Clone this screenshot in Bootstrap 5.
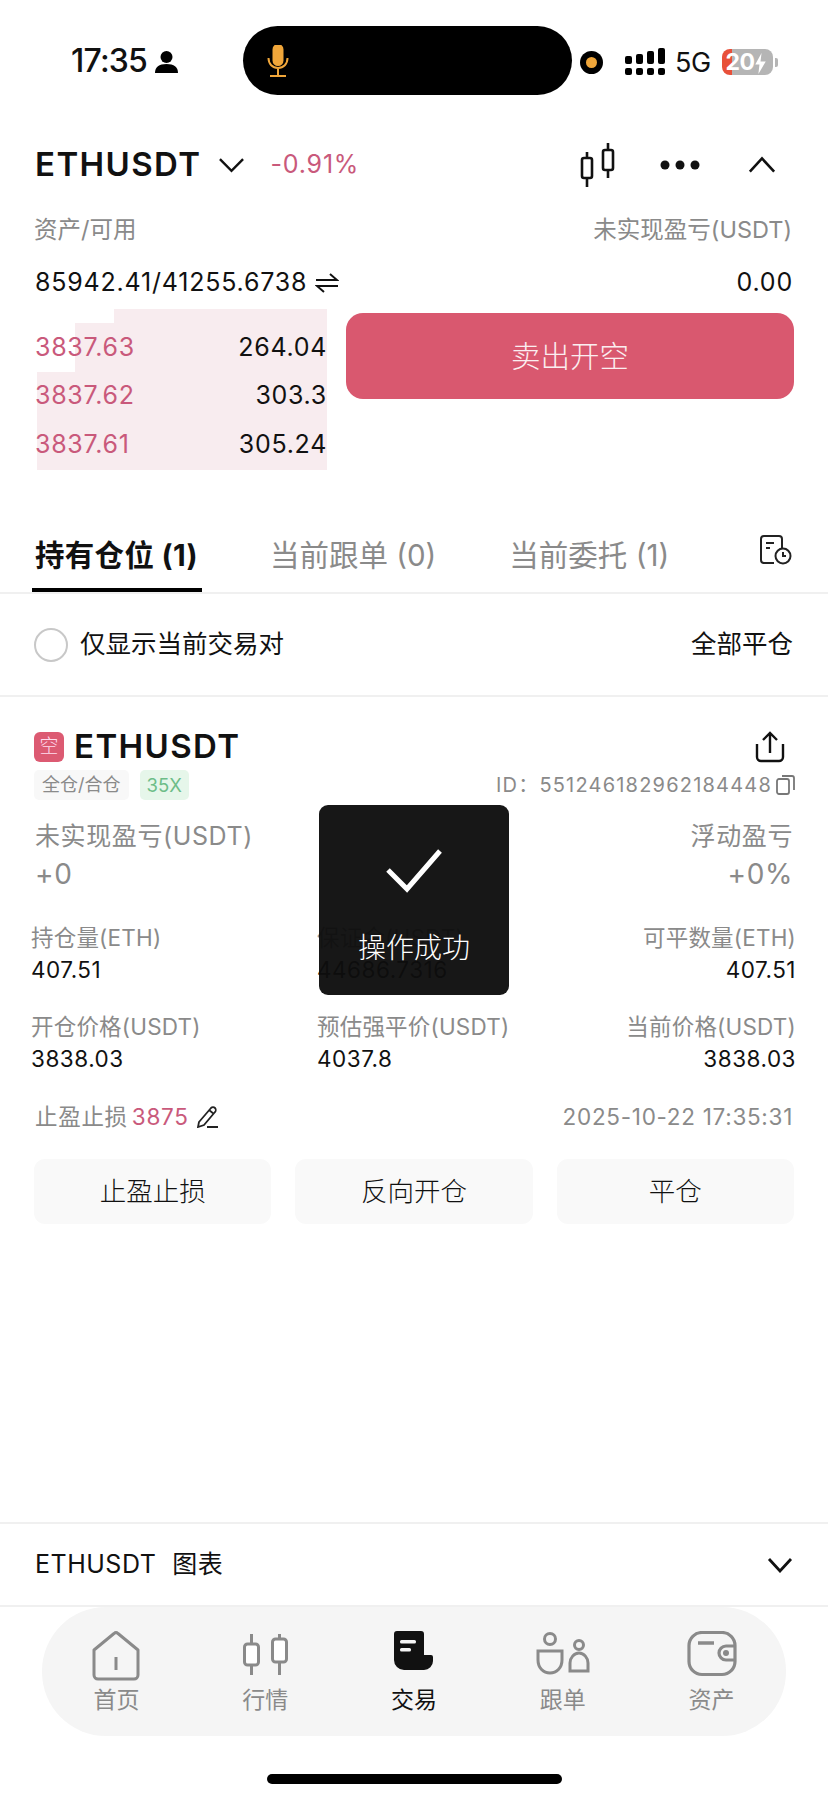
<!doctype html>
<html lang="zh">
<head>
<meta charset="utf-8">
<link href="https://cdn.jsdelivr.net/npm/bootstrap@5.3.2/dist/css/bootstrap.min.css" rel="stylesheet">
<style>
    body {
        width: 828px;
        height: 1800px;
        overflow: hidden;
        position: relative;
        font-family: Inter, "Noto Sans CJK SC", sans-serif;
        color: #111;
    }
    .gray { color: #8a8a8a; }
    .red { color: #c9597b; }
    .status-wrap { height: 122px; padding: 26px 0 0 71px; }
    .clock { font-size: 32px; font-weight: 500; width: 172px; line-height: 70px; letter-spacing: -.8px; }
    .island { width: 329px; height: 69px; background: #000; border-radius: 35px; padding-left: 24px; }
    .five-g { font-size: 27px; letter-spacing: -.5px; line-height: 1; margin: 0 11px 0 10px; }
    .battery { width: 51px; height: 26px; border-radius: 8px; background: linear-gradient(90deg, #e8503a 0 10px, #b5b5b5 10px); color: #fff; font-size: 23px; font-weight: 700; line-height: 26px; padding-left: 4px; letter-spacing: -.5px; white-space: nowrap; }
    .battery-nub { width: 3px; height: 9px; background: #b5b5b5; border-radius: 0 2px 2px 0; margin-left: 2px; }
    .head-row { padding: 0 52px 0 35px; height: 86px; margin-bottom: 2px; }
    .pair { font-size: 33px; font-weight: 600; letter-spacing: 1.4px; }
    .pct { font-size: 25px; letter-spacing: .8px; margin-left: 26px; }
    .label-row { padding: 0 36px 0 34px; font-size: 23.5px; height: 40px; }
    .bal-row { padding: 0 35px; font-size: 25px; letter-spacing: .8px; height: 40px; margin-top: 13px; }
    .trade-row { padding: 6px 34px 0 37px; height: 172px; }
    .book {
        width: 290px;
        height: 161px;
        padding-top: 14px;
        font-size: 25px;
        letter-spacing: .7px;
        background:
            linear-gradient(#fff, #fff) 0 0 / 77px 14px no-repeat,
            linear-gradient(#fff, #fff) 0 14px / 38px 49px no-repeat,
            #f8ecef;
    }
    .book-line { height: 48.5px; }
    .book-line .red { margin-left: -2px; }
    .sell-btn { width: 448px; height: 86px; margin: 4px 0 0 19px; background: #d9586f; color: #fbeef0; border: 0; border-radius: 17px; font-size: 29.5px; font-weight: 300; }
    .sell-btn:hover { background: #d9586f; color: #fbeef0; }
    .tab-row { height: 131px; padding: 0 36px 0 35px; border-bottom: 2px solid #f0f0f0; margin-top: -12px; }
    .tab-item { font-size: 29.5px; line-height: 40px; padding-bottom: 17px; position: relative; }
    .tab-on { font-weight: 700; color: #111; letter-spacing: .3px; }
    .tab-on::after { content: ""; position: absolute; left: -3px; right: -4px; bottom: 0; height: 4px; background: #000; }
    .filter-row { height: 103px; padding: 0 35px 0 34px; border-bottom: 2px solid #f0f0f0; font-size: 25.5px; }
    .radio-dot { width: 34px; height: 34px; border: 2px solid #c8c8c8; border-radius: 50%; }
    .pos-head { padding: 34px 43px 0 34px; height: 65px; }
    .side-mark { width: 30px; height: 30px; background: #dc5a72; color: #fde; border-radius: 6px; font-size: 19px; font-weight: 300; line-height: 30px; text-align: center; margin-right: 10px; }
    .tag-row { padding: 0 33px 0 34px; height: 32px; margin-top: 7px; }
    .tag-gray { background: #f8f8f8; color: #8a8a8a; font-size: 18px; padding: 0 8px; border-radius: 5px; line-height: 30px; }
    .tag-green { background: #e6f6ea; color: #6dbd88; font-size: 18.5px; padding: 0 7px; border-radius: 5px; line-height: 30px; margin-left: 11px; }
    .order-id { font-size: 20px; letter-spacing: 1.2px; }
    .pnl-row { padding: 17px 35px 0; height: 120px; }
    .pnl-label { font-size: 25px; letter-spacing: .6px; line-height: 36px; }
    .pnl-value { font-size: 28px; letter-spacing: .6px; line-height: 40px; }
    .grid-row { padding: 0 32px 0 31px; height: 89px; }
    .grid-cell { width: 286px; }
    .grid-cell.end { flex: 1; text-align: right; }
    .cell-label { font-size: 22.5px; letter-spacing: .2px; line-height: 34px; color: #8a8a8a; }
    .cell-value { font-size: 22.5px; letter-spacing: .5px; line-height: 30px; }
    .stop-row { padding: 0 35px; height: 44px; margin-top: -4px; font-size: 22.5px; letter-spacing: .7px; }
    .act-row { padding: 20px 34px 0; gap: 24px; }
    .act-btn { flex: 1; height: 65px; background: #f9f9f9; border: 0; border-radius: 11px; font-size: 26.5px; font-weight: 300; color: #111; padding: 0; }
    .act-btn:hover { background: #f9f9f9; color: #111; }
    .chart-row { margin-top: 298px; height: 85px; border-top: 2px solid #f0f0f0; border-bottom: 2px solid #f0f0f0; padding: 0 35px; font-size: 25px; letter-spacing: .5px; }
    .tabbar { width: 744px; height: 129px; margin-left: 42px; background: #f5f5f5; border-radius: 64px; padding: 24px 0 0 0; }
    .tb-item { width: 149px; font-size: 23px; line-height: 30px; color: #8a8a8a; text-align: center; }
    .tb-item svg { display: block; margin: 0 auto 4px; }
    .tb-on { color: #111; }
    .home-bar { width: 295px; height: 10px; background: #000; border-radius: 5px; margin: 38px auto 0; }
    .toast-box { position: absolute; left: 319px; top: 805px; width: 190px; height: 190px; background: rgba(14,14,14,.96); border-radius: 9px; color: #fff; text-align: center; font-size: 28px; font-weight: 300; padding-top: 44px; }
    .toast-box svg { display: block; margin: 0 auto 34px; }
</style>
</head>
<body>

<div class="status-wrap d-flex">
    <div class="clock d-flex align-items-start">17:35
        <svg class="ms-2 mt-4" width="23" height="24" viewBox="0 0 23 24"><circle cx="11.5" cy="7" r="6"/><path d="M0 23c0-6 4-9 11.5-9S23 17 23 23z"/></svg>
    </div>
    <div class="island d-flex align-items-center">
        <svg width="22" height="32" viewBox="0 0 22 32" fill="none" stroke="#f0a63a" stroke-width="2"><rect x="6.5" y="0" width="9" height="20" rx="4.5" fill="#f0a63a"/><path d="M1.500 13c0 6 4 10 9.500 10s9.500-4 9.500-10M11 23v7M3 31h16"/></svg>
    </div>
    <div class="d-flex align-items-center" style="height:72px">
        <svg class="ms-2" width="23" height="23" viewBox="0 0 23 23"><circle cx="11.500" cy="11.500" r="11.500" fill="#000"/><circle cx="11.500" cy="11.500" r="5.500" fill="#f0a63a"/></svg>
        <svg style="margin-left:22px" width="40" height="28" viewBox="0 0 40 28"><g fill="#000"><rect x="0" y="8" width="7" height="8" rx="2"/><rect x="0" y="20" width="7" height="7" rx="2"/><rect x="11" y="6" width="7" height="10" rx="2"/><rect x="11" y="20" width="7" height="7" rx="2"/><rect x="22" y="3" width="7" height="13" rx="2"/><rect x="22" y="20" width="7" height="7" rx="2"/><rect x="33" y="0" width="7" height="16" rx="2"/><rect x="33" y="20" width="7" height="7" rx="2"/></g></svg>
        <span class="five-g">5G</span>
        <span class="battery">20<svg width="11" height="21" viewBox="0 0 10 20"><path d="M6 0L0 11h4l-1 9 7-12H5z" fill="#fff"/></svg></span>
        <span class="battery-nub"></span>
    </div>
</div>

<div class="head-row d-flex align-items-center">
    <span class="pair">ETHUSDT</span>
    <svg class="ms-3" width="27" height="16" viewBox="0 0 28 16" fill="none" stroke="#111" stroke-width="2.500"><path d="M2 2l12 12L26 2"/></svg>
    <span class="pct red">-0.91%</span>
    <svg class="ms-auto" width="35" height="44" viewBox="0 0 35 44" fill="none" stroke="#111" stroke-width="2.600"><rect x="2" y="15" width="10" height="20" rx="2"/><path d="M7 9v6M7 35v9"/><rect x="23" y="7" width="10" height="20" rx="2"/><path d="M28 0v7M28 27v8"/></svg>
    <svg style="margin-left:45px" width="40" height="10" viewBox="0 0 40 10" fill="#111"><circle cx="5" cy="5" r="4.500"/><circle cx="20" cy="5" r="4.500"/><circle cx="35" cy="5" r="4.500"/></svg>
    <svg style="margin-left:48px" width="28" height="18" viewBox="0 0 30 18" fill="none" stroke="#111" stroke-width="2.800"><path d="M2 16L15 2l13 14"/></svg>
</div>

<div class="label-row d-flex justify-content-between align-items-center gray">
    <span>资产/可用</span>
    <span>未实现盈亏(USDT)</span>
</div>

<div class="bal-row d-flex align-items-center">
    <span>85942.41/41255.6738</span>
    <svg class="ms-2" width="24" height="20" viewBox="0 0 24 20" fill="none" stroke="#111" stroke-width="2"><path d="M1 7h21L15 1M23 13H2l7 6"/></svg>
    <span class="ms-auto">0.00</span>
</div>

<div class="trade-row d-flex">
    <div class="book">
        <div class="book-line d-flex justify-content-between align-items-center"><span class="red">3837.63</span><span>264.04</span></div>
        <div class="book-line d-flex justify-content-between align-items-center"><span class="red">3837.62</span><span>303.3</span></div>
        <div class="book-line d-flex justify-content-between align-items-center"><span class="red">3837.61</span><span>305.24</span></div>
    </div>
    <button type="button" class="btn sell-btn">卖出开空</button>
</div>

<div class="tab-row d-flex align-items-end">
    <div class="tab-item tab-on">持有仓位 (1)</div>
    <div class="tab-item gray" style="margin-left:72px">当前跟单 (0)</div>
    <div class="tab-item gray" style="margin-left:73px">当前委托 (1)</div>
    <svg class="ms-auto align-self-start" style="margin-top:72px" width="32" height="30" viewBox="0 0 32 30" fill="none" stroke="#222" stroke-width="2"><path d="M14 28H4a3 3 0 0 1-3-3V4a3 3 0 0 1 3-3h15a3 3 0 0 1 3 3v9"/><path d="M6 8h8M6 13h4"/><circle cx="23" cy="21" r="7.500"/><path d="M23 17v4h3"/></svg>
</div>

<div class="filter-row d-flex align-items-center">
    <span class="radio-dot me-2"></span>
    <span class="ms-1">仅显示当前交易对</span>
    <span class="ms-auto">全部平仓</span>
</div>

<div class="pos-head d-flex align-items-center">
    <span class="side-mark">空</span>
    <span class="pair">ETHUSDT</span>
    <svg class="ms-auto" width="30" height="32" viewBox="0 0 30 32" fill="none" stroke="#111" stroke-width="2.400"><path d="M2 13v13a4 4 0 0 0 4 4h18a4 4 0 0 0 4-4V13M15 22V2M8 9l7-7 7 7"/></svg>
</div>

<div class="tag-row d-flex align-items-center">
    <span class="tag-gray">全仓/合仓</span>
    <span class="tag-green">35X</span>
    <span class="order-id gray ms-auto">ID：551246182962184448</span>
    <svg class="ms-1" width="19" height="20" viewBox="0 0 19 20" fill="none" stroke="#777" stroke-width="1.800"><rect x="1" y="4" width="12" height="15" rx="2"/><path d="M6 1h10a2 2 0 0 1 2 2v12"/></svg>
</div>

<div class="pnl-row d-flex justify-content-between">
    <div class="gray">
        <div class="pnl-label">未实现盈亏(USDT)</div>
        <div class="pnl-value">+0</div>
    </div>
    <div class="gray text-end">
        <div class="pnl-label">浮动盈亏</div>
        <div class="pnl-value">+0%</div>
    </div>
</div>

<div class="grid-row d-flex">
    <div class="grid-cell"><div class="cell-label">持仓量(ETH)</div><div class="cell-value">407.51</div></div>
    <div class="grid-cell"><div class="cell-label">保证金(USDT)</div><div class="cell-value">44686.7316</div></div>
    <div class="grid-cell end"><div class="cell-label">可平数量(ETH)</div><div class="cell-value">407.51</div></div>
</div>
<div class="grid-row d-flex">
    <div class="grid-cell"><div class="cell-label">开仓价格(USDT)</div><div class="cell-value">3838.03</div></div>
    <div class="grid-cell"><div class="cell-label">预估强平价(USDT)</div><div class="cell-value">4037.8</div></div>
    <div class="grid-cell end"><div class="cell-label">当前价格(USDT)</div><div class="cell-value">3838.03</div></div>
</div>

<div class="stop-row d-flex align-items-center">
    <span class="gray">止盈止损</span>
    <span class="red ms-1">3875</span>
    <svg class="ms-2" width="22" height="22" viewBox="0 0 22 22" fill="none" stroke="#222" stroke-width="1.800"><path d="M2 16L14 2c1-1 3-1 4 0s1 3 0 4L7 19l-6 2zM12 4l5 4M10 21h11"/></svg>
    <span class="gray ms-auto">2025-10-22 17:35:31</span>
</div>

<div class="act-row d-flex">
    <button type="button" class="btn act-btn">止盈止损</button>
    <button type="button" class="btn act-btn">反向开仓</button>
    <button type="button" class="btn act-btn">平仓</button>
</div>

<div class="chart-row d-flex align-items-center">
    <span>ETHUSDT</span>
    <span class="ms-3">图表</span>
    <svg class="ms-auto" width="26" height="16" viewBox="0 0 26 16" fill="none" stroke="#111" stroke-width="2.800"><path d="M2 2l11 12L24 2"/></svg>
</div>

<div class="tabbar d-flex">
    <div class="tb-item">
        <svg width="48" height="50" viewBox="0 0 48 50" fill="none" stroke="#8a8a8a" stroke-width="3" stroke-linejoin="round"><path d="M2 19L22 2.500a3 3 0 0 1 4 0L46 19v25a4 4 0 0 1-4 4H6a4 4 0 0 1-4-4zM24 26v13"/></svg>首页
    </div>
    <div class="tb-item">
        <svg width="45" height="50" viewBox="0 -3 45 50" fill="#fff" stroke="#8a8a8a" stroke-width="3"><rect x="1.500" y="10" width="14" height="21" rx="3"/><path d="M8.500 0v10M8.500 31v10"/><rect x="29.500" y="5" width="14" height="23" rx="3"/><path d="M36.500 0v5M36.500 28v13"/></svg>行情
    </div>
    <div class="tb-item tb-on">
        <svg width="39" height="50" viewBox="0 0 39 50"><path d="M3 0h24a3 3 0 0 1 3 3v21h7a2 2 0 0 1 2 2v4a9 9 0 0 1-9 9H10a10 10 0 0 1-10-10V3a3 3 0 0 1 3-3z" fill="#111"/><rect x="6" y="9" width="16" height="3.500" rx="1.500" fill="#f5f5f5"/><rect x="6" y="17" width="11" height="3.500" rx="1.500" fill="#f5f5f5"/></svg>交易
    </div>
    <div class="tb-item">
        <svg width="54" height="50" viewBox="0 0 54 50" fill="none" stroke="#8a8a8a" stroke-width="3"><circle cx="14" cy="8" r="5.500"/><path d="M2 20h24v9c0 8-5.500 13-12 13S2 37 2 29z"/><circle cx="43" cy="14" r="4.500"/><path d="M34 40V32c0-5 4-10 9-10s9 5 9 10v8z"/></svg>跟单
    </div>
    <div class="tb-item">
        <svg width="50" height="50" viewBox="0 0 50 50" fill="none" stroke="#8a8a8a" stroke-width="3.200"><rect x="2" y="1.500" width="46" height="42" rx="13"/><path d="M11 12h16" stroke-width="3.500"/><path d="M48 15h-9a7 7 0 0 0 0 14h9"/><circle cx="39" cy="22" r="3" fill="#8a8a8a" stroke="none"/></svg>资产
    </div>
</div>

<div class="home-bar"></div>

<div class="toast-box">
    <svg width="56" height="44" viewBox="0 0 56 44" fill="none" stroke="#fff" stroke-width="5"><path d="M2 21l19 19L54 2"/></svg>
    操作成功
</div>

</body>
</html>
